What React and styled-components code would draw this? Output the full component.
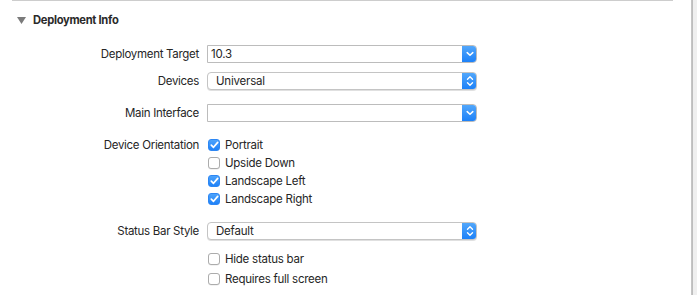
import React from "react";
import styled, { createGlobalStyle } from "styled-components";

const GlobalStyle = createGlobalStyle`
  html, body { margin: 0; padding: 0; background: #fff; }
  body { font-family: Inter, "Noto Sans", sans-serif; -webkit-font-smoothing: antialiased; }
`;

const Window = styled.div`
  width: 697px;
  height: 295px;
  display: flex;
  overflow: hidden;
`;

const Main = styled.div`
  width: 691px;
  background: #fff;
  display: flex;
  flex-direction: column;
`;

const Divider = styled.div`
  width: 2px;
  background: linear-gradient(to right, #c9c9c9, #b9b9b9);
`;

const Strip = styled.div`
  flex: 1;
  background: #efefef;
`;

const Header = styled.div`
  margin: 0 18px 0 12px;
  border-top: 1px solid #cdcdcd;
  height: 37px;
  display: flex;
  align-items: center;
  gap: 7px;
  padding-left: 5px;
  box-sizing: content-box;
`;

const Disclosure = styled.svg`
  width: 9px;
  height: 7px;
  margin-top: 1px;
`;

const HeaderTitle = styled.span`
  font-size: 11.2px;
  font-weight: 700;
  letter-spacing: -0.3px;
  color: #2a2a2a;
`;

const Form = styled.div`
  display: flex;
  flex-direction: column;
  padding-top: 7px;
`;

const Row = styled.div`
  display: flex;
  align-items: flex-start;
  gap: 8px;
  margin-top: ${(p) => p.$gap || 0}px;
`;

const Label = styled.div`
  width: 199px;
  flex: none;
  text-align: right;
  font-size: 11.5px;
  letter-spacing: -0.3px;
  color: #262626;
  line-height: 18px;
`;

const Field = styled.div`
  width: 270px;
  height: 18px;
  box-sizing: border-box;
  display: flex;
  align-items: stretch;
  border: 1px solid ${(p) => (p.$rounded ? "#c4c4c4" : "#bcbcbc")};
  border-radius: ${(p) => (p.$rounded ? "4px" : "0 4px 4px 0")};
  box-shadow: ${(p) => (p.$rounded ? "0 1px 0.5px rgba(0,0,0,0.12)" : "none")};
  background: #fff;
  overflow: hidden;
`;

const FieldText = styled.div`
  flex: 1;
  font-size: 11.5px;
  letter-spacing: -0.2px;
  color: #262626;
  line-height: 16px;
  padding-left: ${(p) => (p.$rounded ? "8px" : "3px")};
`;

const BlueButton = styled.div`
  width: 15px;
  flex: none;
  margin: -1px -1px -1px 0;
  border-radius: 0 4px 4px 0;
  background: linear-gradient(#55a9fb, #1a7ff8);
  display: flex;
  align-items: center;
  justify-content: center;
`;

const Checks = styled.div`
  display: flex;
  flex-direction: column;
`;

const CheckRow = styled.label`
  display: flex;
  align-items: center;
  gap: 5px;
  height: 18px;
  margin-top: ${(p) => p.$gap || 0}px;
  font-size: 11.5px;
  letter-spacing: -0.25px;
  color: #262626;
  padding-left: 1px;
`;

const Box = styled.span`
  width: 12px;
  height: 12px;
  box-sizing: border-box;
  border-radius: 3px;
  display: flex;
  align-items: center;
  justify-content: center;
  border: 1px solid ${(p) => (p.$checked ? "#2d87f4" : "#acacac")};
  background: ${(p) => (p.$checked ? "linear-gradient(#4da3fb, #1f82f8)" : "#fff")};
  box-shadow: ${(p) => (p.$checked ? "none" : "0 0.5px 0.5px rgba(0,0,0,0.1)")};
`;

const ChevronDown = () => (
  <svg width="8" height="6" viewBox="0 0 8 6">
    <path d="M1.2 1.6 L4 4.2 L6.8 1.6" fill="none" stroke="#fff" strokeWidth="1.5" strokeLinecap="round" strokeLinejoin="round" />
  </svg>
);

const ChevronUpDown = () => (
  <svg width="8" height="12" viewBox="0 0 8 12">
    <path d="M1.5 4.3 L4 1.8 L6.5 4.3" fill="none" stroke="#fff" strokeWidth="1.4" strokeLinecap="round" strokeLinejoin="round" />
    <path d="M1.5 7.7 L4 10.2 L6.5 7.7" fill="none" stroke="#fff" strokeWidth="1.4" strokeLinecap="round" strokeLinejoin="round" />
  </svg>
);

const Check = () => (
  <svg width="9" height="8" viewBox="0 0 9 8">
    <path d="M1.3 4.2 L3.5 6.3 L7.7 1.4" fill="none" stroke="#fff" strokeWidth="1.7" strokeLinecap="round" strokeLinejoin="round" />
  </svg>
);

const Combo = ({ value }) => (
  <Field>
    <FieldText>{value}</FieldText>
    <BlueButton>
      <ChevronDown />
    </BlueButton>
  </Field>
);

const Popup = ({ value }) => (
  <Field $rounded>
    <FieldText $rounded>{value}</FieldText>
    <BlueButton>
      <ChevronUpDown />
    </BlueButton>
  </Field>
);

const CheckItem = ({ checked, label, gap }) => (
  <CheckRow $gap={gap}>
    <Box $checked={checked}>{checked && <Check />}</Box>
    {label}
  </CheckRow>
);

export default function App() {
  return (
    <>
      <GlobalStyle />
      <Window>
        <Main>
          <Header>
            <Disclosure viewBox="0 0 9 7">
              <path d="M0 0 H9 L4.5 7 Z" fill="#7b7b7b" />
            </Disclosure>
            <HeaderTitle>Deployment Info</HeaderTitle>
          </Header>
          <Form>
            <Row>
              <Label>Deployment Target</Label>
              <Combo value="10.3" />
            </Row>
            <Row $gap={9}>
              <Label>Devices</Label>
              <Popup value="Universal" />
            </Row>
            <Row $gap={14}>
              <Label>Main Interface</Label>
              <Combo value="" />
            </Row>
            <Row $gap={14}>
              <Label>Device Orientation</Label>
              <Checks>
                <CheckItem checked label="Portrait" />
                <CheckItem label="Upside Down" />
                <CheckItem checked label="Landscape Left" />
                <CheckItem checked label="Landscape Right" />
              </Checks>
            </Row>
            <Row $gap={14}>
              <Label>Status Bar Style</Label>
              <Popup value="Default" />
            </Row>
            <Row $gap={10}>
              <Label />
              <Checks>
                <CheckItem label="Hide status bar" />
                <CheckItem gap={2} label="Requires full screen" />
              </Checks>
            </Row>
          </Form>
        </Main>
        <Divider />
        <Strip />
      </Window>
    </>
  );
}
